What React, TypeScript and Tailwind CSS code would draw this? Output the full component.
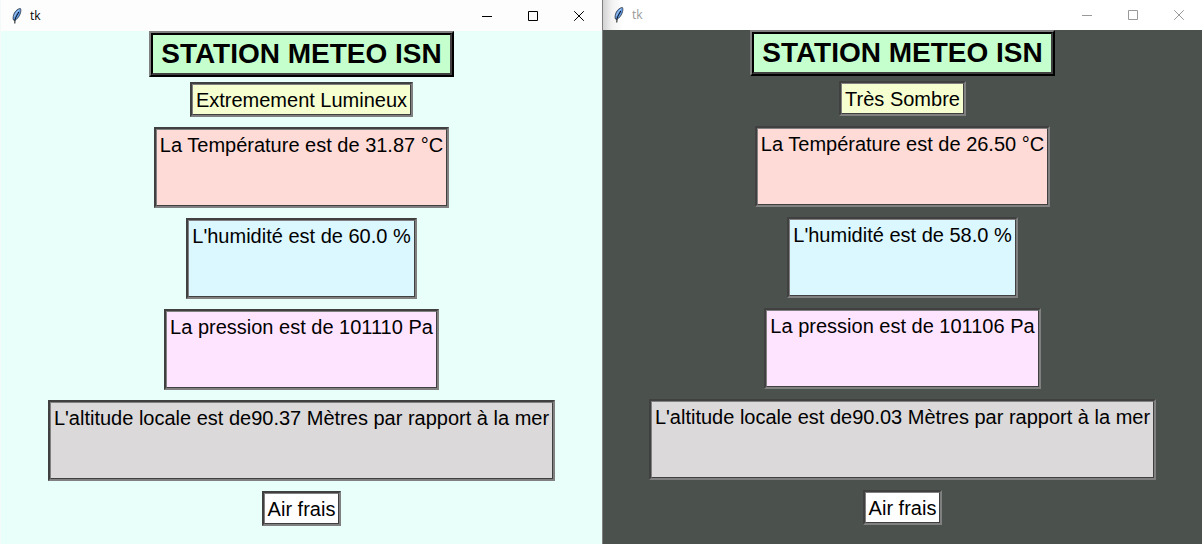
import React from "react";
import clsx from "clsx";

type Reading = { text: string; color: string; tall?: boolean };

function Feather() {
  return (
    <svg width="10" height="16" viewBox="0 0 10 16" aria-hidden="true">
      <path d="M8.4 0.5 C6.2 0.6 3.8 2.4 2.4 5 C1.2 7.4 0.7 10 1.4 12 L2.9 12.4 C5.4 11 7.8 8 8.5 4.8 C9 3 9 1.4 8.4 0.5 Z" fill="#5b97e2" stroke="#2c3440" strokeWidth="0.8" />
      <path d="M7.4 1.8 C5.2 3.2 3.4 5.6 2.5 8.6" fill="none" stroke="#b4cdec" strokeWidth="1" />
      <path d="M6.8 4 C5.2 6.6 3.6 9.4 3 11.6 L2.8 15.5" fill="none" stroke="#0c1016" strokeWidth="1" />
    </svg>
  );
}

function CaptionButton({ label, children }: { label: string; children: React.ReactNode }) {
  return (
    <button type="button" aria-label={label} className="flex h-full w-[46px] items-center justify-center">
      <svg width="10" height="10" viewBox="0 0 10 10" fill="none" stroke="currentColor">
        {children}
      </svg>
    </button>
  );
}

function TitleBar({ active }: { active: boolean }) {
  return (
    <header
      className={clsx(
        "flex items-center",
        active
          ? "h-[31px] bg-[#fdfdfd] pl-[11px] text-black"
          : "h-[30px] bg-white bg-[linear-gradient(to_right,#d2d2d2,#f2f2f2_9px,#ffffff_20px)] pl-[11px] text-[#999999]",
      )}
    >
      <Feather />
      <span className="ml-2 flex-1 font-['Open_Sans','Noto_Sans',sans-serif] text-[12px] leading-4">tk</span>
      <div className="flex h-full">
        <CaptionButton label="Minimize">
          <path d="M0 5.5H10" />
        </CaptionButton>
        <CaptionButton label="Maximize">
          <path d="M0.5 0.5H9.5V9.5H0.5Z" />
        </CaptionButton>
        <CaptionButton label="Close">
          <path d="M0.2 0.2L9.8 9.8M9.8 0.2L0.2 9.8" />
        </CaptionButton>
      </div>
    </header>
  );
}

function Readout({ text, color, tall }: Reading) {
  return (
    <div className="border-2 border-t-[#404040] border-r-[#808080] border-b-[#808080] border-l-[#404040]">
      <p
        className={clsx(
          "border border-t-[#808080] border-r-[#404040] border-b-[#404040] border-l-[#808080] px-[3px] pt-1 text-[20px] leading-[23px] whitespace-nowrap",
          tall ? "h-[77px]" : "h-[31px]",
          color,
        )}
      >
        {text}
      </p>
    </div>
  );
}

function StationWindow({ active, readings }: { active: boolean; readings: Reading[] }) {
  return (
    <section
      className={clsx(
        "flex min-w-0 flex-col",
        active ? "border-r border-l border-r-[#808080] border-l-[#f4fafa] bg-[#e8fffa]" : "bg-[#4b514c]",
      )}
    >
      <TitleBar active={active} />
      <main className="flex flex-col items-center">
        <div className="border-2 border-t-[#808080] border-r-black border-b-black border-l-[#808080]">
          <h1 className="h-[42px] border-2 border-t-black border-r-[#404040] border-b-[#404040] border-l-black bg-[#c6ffce] px-2 pt-[2px] text-[28px] leading-[34px] font-bold whitespace-nowrap">
            STATION METEO ISN
          </h1>
        </div>
        <div className="mt-[5px] flex flex-col items-center gap-[10px]">
          {readings.map((r) => (
            <Readout key={r.text} {...r} />
          ))}
        </div>
      </main>
    </section>
  );
}

const bright: Reading[] = [
  { text: "Extremement Lumineux", color: "bg-[#f6ffd0]" },
  { text: "La Température est de 31.87 °C", color: "bg-[#ffdbd7]", tall: true },
  { text: "L'humidité est de 60.0 %", color: "bg-[#dbf7ff]", tall: true },
  { text: "La pression est de 101110 Pa", color: "bg-[#ffe4ff]", tall: true },
  { text: "L'altitude locale est de90.37 Mètres par rapport à la mer", color: "bg-[#dbd9da]", tall: true },
  { text: "Air frais", color: "bg-white" },
];

const dark: Reading[] = [
  { text: "Très Sombre", color: "bg-[#f6ffd0]" },
  { text: "La Température est de 26.50 °C", color: "bg-[#ffdbd7]", tall: true },
  { text: "L'humidité est de 58.0 %", color: "bg-[#dbf7ff]", tall: true },
  { text: "La pression est de 101106 Pa", color: "bg-[#ffe4ff]", tall: true },
  { text: "L'altitude locale est de90.03 Mètres par rapport à la mer", color: "bg-[#dbd9da]", tall: true },
  { text: "Air frais", color: "bg-white" },
];

export default function App() {
  return (
    <div className="grid min-h-screen grid-cols-[603fr_599fr] font-['Liberation_Sans',Arial,sans-serif] text-black">
      <StationWindow active readings={bright} />
      <StationWindow active={false} readings={dark} />
    </div>
  );
}
